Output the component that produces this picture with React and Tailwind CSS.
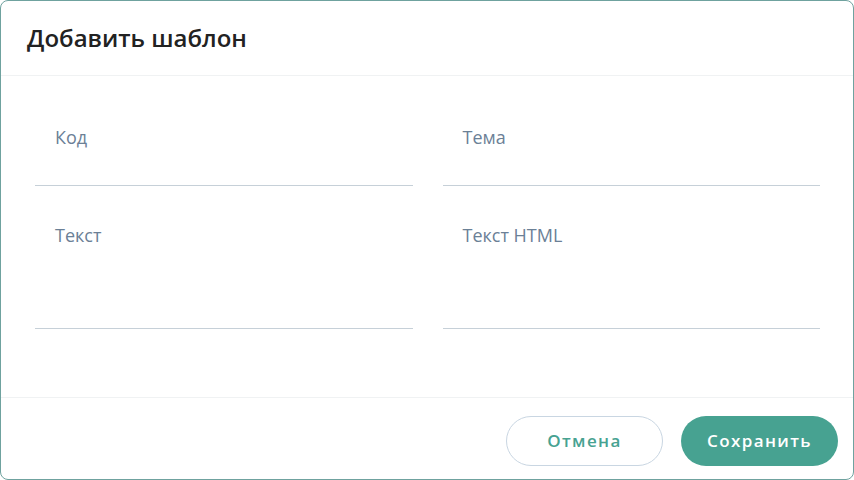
import React from "react";

const Field = ({ label, tall }) => (
  <div className={`border-b border-[#c6d0d8] ${tall ? "h-[105px]" : "h-[60px]"}`}>
    <div className="pl-5 text-[18px] leading-[22px] text-[#6b8096]">{label}</div>
  </div>
);

export default function App() {
  return (
    <div className="w-[854px] h-[480px] bg-white" style={{ fontFamily: '"Open Sans", "Noto Sans", sans-serif' }}>
      <div className="w-full h-full border border-[#6fa29f] rounded-lg flex flex-col overflow-hidden">
        <div className="h-[75px] flex items-center px-[26px] border-b border-[#f0f2f3]">
          <h2 className="text-[24px] leading-8 font-semibold text-[#222]">Добавить шаблон</h2>
        </div>
        <div className="flex-1 pl-[34px] pr-[33px] pt-[50px]">
          <div className="grid grid-cols-2 gap-x-[30px] gap-y-[38px]">
            <Field label="Код" />
            <Field label="Тема" />
            <Field label="Текст" tall />
            <Field label="Текст HTML" tall />
          </div>
        </div>
        <div className="h-[82px] border-t border-[#f0f2f3] flex items-start justify-end gap-[18px] pt-[18px] pr-[15px]">
          <button className="w-[157px] h-[50px] rounded-full border border-[#c9d6e2] bg-white text-[#47a291] text-[17px] font-semibold tracking-[1.4px]">
            Отмена
          </button>
          <button className="w-[157px] h-[50px] rounded-full bg-[#47a291] text-white text-[17px] font-semibold tracking-[1.4px]">
            Сохранить
          </button>
        </div>
      </div>
    </div>
  );
}
